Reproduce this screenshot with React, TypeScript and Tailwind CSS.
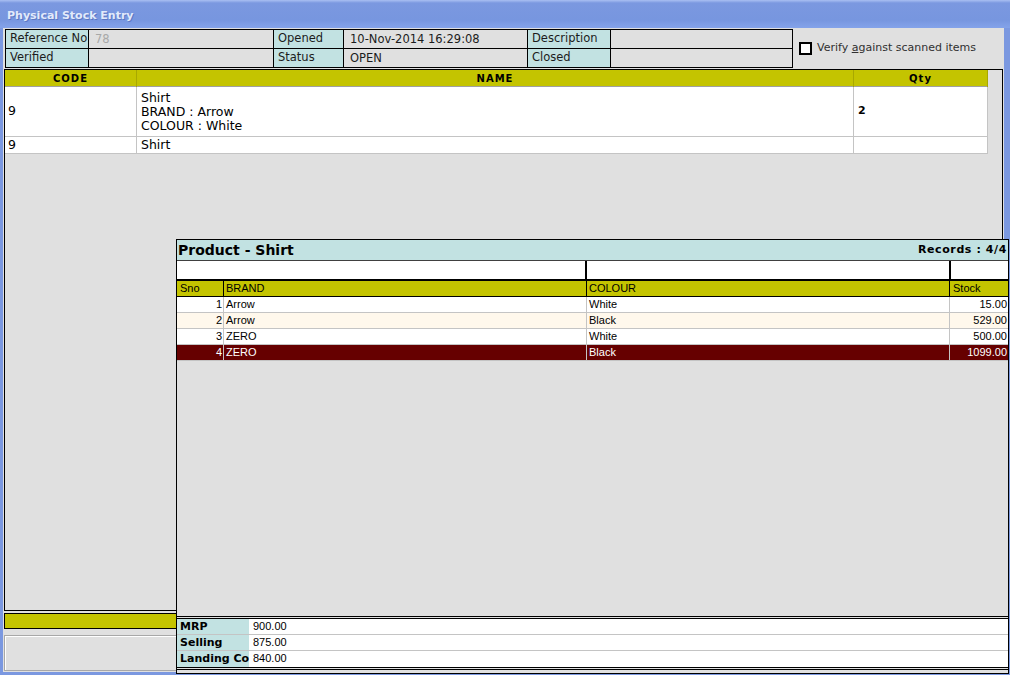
import React from "react";

const headerCells = [
  { label: "Reference No", value: "78", dim: true },
  { label: "Opened", value: "10-Nov-2014 16:29:08" },
  { label: "Description", value: "" },
];
const headerCells2 = [
  { label: "Verified", value: "" },
  { label: "Status", value: "OPEN" },
  { label: "Closed", value: "" },
];

const products = [
  { sno: 1, brand: "Arrow", colour: "White", stock: "15.00" },
  { sno: 2, brand: "Arrow", colour: "Black", stock: "529.00" },
  { sno: 3, brand: "ZERO", colour: "White", stock: "500.00" },
  { sno: 4, brand: "ZERO", colour: "Black", stock: "1099.00" },
];

const prices = [
  { label: "MRP", value: "900.00" },
  { label: "Selling", value: "875.00" },
  { label: "Landing Cost", value: "840.00" },
];

const HeaderRow = ({ cells }: { cells: { label: string; value: string; dim?: boolean }[] }) => (
  <>
    {cells.map((c) => (
      <React.Fragment key={c.label}>
        <div className="h-[19px] overflow-hidden whitespace-nowrap border-b border-r border-black bg-[#c2e2e2] pl-[4px] leading-[17px]">
          {c.label}
        </div>
        <div
          className={
            "h-[19px] overflow-hidden whitespace-nowrap border-b border-r border-black bg-[#e0e0e0] pl-[6px] leading-[18px] " +
            (c.dim ? "text-[#a8a8a8]" : "")
          }
        >
          {c.value}
        </div>
      </React.Fragment>
    ))}
  </>
);

const ProductPopup = () => (
  <div className="absolute left-[176px] top-[239px] flex h-[435px] w-[833px] flex-col border border-black bg-[#e0e0e0] font-['Liberation_Sans',sans-serif] text-[11px] text-black">
    <div className="flex h-[21px] items-center justify-between border-b border-[#404040] bg-[#c2e2e2] pl-[1px] pr-[1px]">
      <span className="font-['DejaVu_Sans',sans-serif] text-[14px] font-bold leading-none">Product - Shirt</span>
      <span className="font-['DejaVu_Sans',sans-serif] text-[11px] font-bold tracking-[0.6px]">Records : 4/4</span>
    </div>
    <div className="grid h-[20px] grid-cols-[410px_364px_57px] border-b-2 border-black bg-white">
      <div className="border-r-2 border-black" />
      <div className="border-r-2 border-black" />
      <div />
    </div>
    <div className="grid h-[16px] grid-cols-[47px_363px_363px_58px] border-b border-black bg-[#c4c400] leading-[15px]">
      <div className="border-r border-black pl-[3px]">Sno</div>
      <div className="border-r border-black pl-[2px]">BRAND</div>
      <div className="border-r border-black pl-[2px]">COLOUR</div>
      <div className="pl-[3px]">Stock</div>
    </div>
    {products.map((p) => {
      const sel = p.sno === 4;
      const bg = sel ? "bg-[#660000] text-white" : p.sno === 2 ? "bg-[#fff8ec]" : "bg-white";
      return (
        <div key={p.sno} className={"grid h-[16px] grid-cols-[47px_363px_363px_58px] border-b border-[#c4c4c4] leading-[15px] " + bg}>
          <div className="border-r border-[#c4c4c4] pr-[1px] text-right">{p.sno}</div>
          <div className="border-r border-[#c4c4c4] pl-[2px]">{p.brand}</div>
          <div className="border-r border-[#c4c4c4] pl-[2px]">{p.colour}</div>
          <div className="pr-[1px] text-right">{p.stock}</div>
        </div>
      );
    })}
    <div className="flex-1" />
    <div className="h-[3px] border-y border-black bg-[#e0e0e0]" />
    <div className="flex flex-col bg-white">
      {prices.map((p, i) => (
        <div
          key={p.label}
          className={"grid h-[16px] grid-cols-[72px_1fr] leading-[15px] " + (i < 2 ? "border-b border-[#c4c4c4]" : "")}
        >
          <div className="overflow-hidden bg-[#c2e2e2] pl-[3px] font-['DejaVu_Sans',sans-serif] font-bold">
            <div className="w-[69px] overflow-hidden whitespace-nowrap">{p.label}</div>
          </div>
          <div className="pl-[4px]">{p.value}</div>
        </div>
      ))}
    </div>
    <div className="h-[3px] border-y border-black bg-[#e0e0e0]" />
    <div className="h-[3px]" />
  </div>
);

export default function App() {
  return (
    <div className="relative flex h-[675px] w-[1010px] flex-col overflow-hidden bg-[#e0e0e0] font-['DejaVu_Sans',sans-serif] text-[11.5px] text-[#1c1c1c]">
      <div className="flex h-[28px] shrink-0 items-center bg-[linear-gradient(to_bottom,#a9bff2_0px,#7b98e0_3px,#7796df_20px,#84a3ea_28px)] pl-[7px] pt-[4px]">
        <span className="text-[11px] font-bold text-[#e2eafb] [text-shadow:1px_1px_0_#5c78c4]">Physical Stock Entry</span>
      </div>
      <div className="flex flex-1 flex-col border-b-[3px] border-l-[3px] border-r-[6px] border-[#7b98e0] px-[1px]">
        <div className="mt-[1px] flex items-center">
          <div className="ml-[1px] grid grid-cols-[83px_185px_70px_184px_83px_182px] border-l border-t border-black">
            <HeaderRow cells={headerCells} />
            <HeaderRow cells={headerCells2} />
          </div>
          <label className="ml-[6px] flex items-center gap-[5px] text-[11px] text-[#303030]">
            <span className="h-[13px] w-[13px] border-2 border-black bg-white" />
            <span>
              Verify <span className="underline">a</span>gainst scanned items
            </span>
          </label>
        </div>

        <div className="mt-[1px] flex h-[542px] flex-col border border-black">
          <div className="w-[983px] text-[12.5px]">
            <div className="grid h-[17px] grid-cols-[132px_717px_134px] border-b border-[#a0a0a0] bg-[#c4c400] text-center text-[10px] font-bold leading-[17px] tracking-[1px] text-black">
              <div className="border-r border-[#a8a800]">CODE</div>
              <div className="border-r border-[#a8a800]">NAME</div>
              <div className="border-r border-[#a8a800]">Qty</div>
            </div>
            <div className="grid h-[50px] grid-cols-[132px_717px_134px] bg-white text-black">
              <div className="flex items-center border-b border-r border-[#c4c4c4] pl-[3px]">9</div>
              <div className="flex flex-col justify-center border-b border-r border-[#c4c4c4] pl-[4px] leading-[14px]">
                <span>Shirt</span>
                <span>BRAND : Arrow</span>
                <span>COLOUR : White</span>
              </div>
              <div className="flex items-center border-b border-r border-[#c4c4c4] pl-[4px] text-[11px] font-bold">2</div>
            </div>
            <div className="grid h-[17px] grid-cols-[132px_717px_134px] bg-white leading-[16px] text-black">
              <div className="border-b border-r border-[#c4c4c4] pl-[3px]">9</div>
              <div className="border-b border-r border-[#c4c4c4] pl-[4px]">Shirt</div>
              <div className="border-b border-r border-[#c4c4c4]" />
            </div>
          </div>
        </div>

        <div className="mt-[2px] h-[16px] border border-black bg-[#c4c400]" />
        <div className="mt-[6px] h-[36px] border border-[#a8a8a8] shadow-[inset_1px_1px_0_#ffffff]" />
      </div>
      <ProductPopup />
    </div>
  );
}
